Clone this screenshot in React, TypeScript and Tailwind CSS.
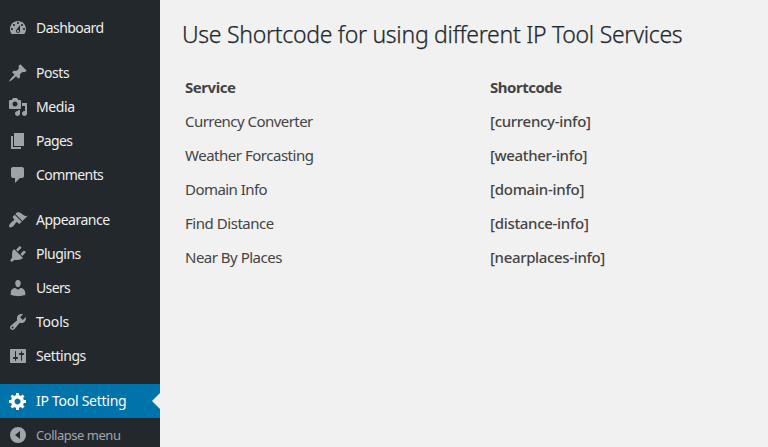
type MenuItem = { label: string; icon: string; tracking: string };

const groups: MenuItem[][] = [
  [
    {
      label: "Dashboard",
      tracking: "tracking-[-0.54px]",
      icon: "M3.76 16h12.48c1.1-1.37 1.76-3.11 1.76-5 0-4.42-3.58-8-8-8s-8 3.58-8 8c0 1.89.66 3.63 1.76 5zM10 4c.55 0 1 .45 1 1s-.45 1-1 1-1-.45-1-1 .45-1 1-1zM6 6c.55 0 1 .45 1 1s-.45 1-1 1-1-.45-1-1 .45-1 1-1zm8 0c.55 0 1 .45 1 1s-.45 1-1 1-1-.45-1-1 .45-1 1-1zm-5.37 5.55L12 7v6c0 1.1-.9 2-2 2s-2-.9-2-2c0-.57.24-1.08.63-1.45zM4 10c.55 0 1 .45 1 1s-.45 1-1 1-1-.45-1-1 .45-1 1-1zm12 0c.55 0 1 .45 1 1s-.45 1-1 1-1-.45-1-1 .45-1 1-1zm-5 3c0-.55-.45-1-1-1s-1 .45-1 1 .45 1 1 1 1-.45 1-1z",
    },
  ],
  [
    {
      label: "Posts",
      tracking: "tracking-[-0.45px]",
      icon: "M10.44 3.02l1.82-1.82 6.36 6.35-1.83 1.82c-1.05-.68-2.48-.57-3.41.36l-.75.75c-.92.93-1.04 2.35-.35 3.41l-1.83 1.82-2.41-2.41-2.8 2.79c-.42.42-3.38 2.71-3.8 2.29s1.86-3.39 2.28-3.81l2.79-2.79L4.1 9.36l1.83-1.82c1.05.69 2.48.57 3.4-.36l.75-.75c.93-.92 1.05-2.35.36-3.41z",
    },
    {
      label: "Media",
      tracking: "tracking-[-0.4px]",
      icon: "M13 11V4c0-.55-.45-1-1-1h-1.67L9 1H5L3.67 3H2c-.55 0-1 .45-1 1v7c0 .55.45 1 1 1h10c.55 0 1-.45 1-1zM7 4.5c1.38 0 2.5 1.12 2.5 2.5S8.38 9.5 7 9.5 4.5 8.38 4.5 7 5.62 4.5 7 4.5zM14 6h5v10.5c0 1.38-1.12 2.5-2.5 2.5S14 17.88 14 16.5s1.12-2.5 2.5-2.5c.17 0 .34.02.5.05V9h-3V6zm-4 8.05V13h2v3.5c0 1.38-1.12 2.5-2.5 2.5S7 17.88 7 16.5 8.12 14 9.5 14c.17 0 .34.02.5.05z",
    },
    {
      label: "Pages",
      tracking: "tracking-[-0.65px]",
      icon: "M6 15V2h10v13H6zm-1 1h8v2H3V5h2v11z",
    },
    {
      label: "Comments",
      tracking: "tracking-[-0.57px]",
      icon: "M5 2h9c1.1 0 2 .9 2 2v7c0 1.1-.9 2-2 2h-2l-5 5v-5H5c-1.1 0-2-.9-2-2V4c0-1.1.9-2 2-2z",
    },
  ],
  [
    {
      label: "Appearance",
      tracking: "tracking-[-0.5px]",
      icon: "M14.48 11.06L7.41 3.99l1.5-1.5c.5-.56 2.3-.47 3.51.32 1.21.8 1.43 1.28 2.91 2.1 1.18.64 2.45 1.26 4.45.85zm-.71.71L6.7 4.7 4.93 6.47c-.39.39-.39 1.02 0 1.41l1.06 1.06c.39.39.39 1.03 0 1.42-.6.6-1.43 1.11-2.21 1.69-.35.26-.7.53-1.01.84C1.43 14.23.4 16.08 1.4 17.07c.99 1 2.84-.03 4.18-1.36.31-.31.58-.66.85-1.02.57-.78 1.08-1.61 1.69-2.21.39-.39 1.02-.39 1.41 0l1.06 1.06c.39.39 1.02.39 1.41 0z",
    },
    {
      label: "Plugins",
      tracking: "tracking-[-0.5px]",
      icon: "M13.11 4.36L9.87 7.6 8 5.73l3.24-3.24c.35-.34 1.05-.2 1.56.32.52.51.66 1.21.31 1.55zm-8 1.77l.91-1.12 9.01 9.01-1.19.84c-.71.71-2.63 1.16-3.82 1.16H6.14L4.9 17.26c-.59.59-1.54.59-2.12 0-.59-.58-.59-1.53 0-2.12l1.24-1.24v-3.88c0-1.13.4-3.19 1.09-3.89zm7.26 3.97l3.24-3.24c.34-.35 1.04-.21 1.55.31.52.51.66 1.21.31 1.55l-3.24 3.25z",
    },
    {
      label: "Users",
      tracking: "tracking-[-0.65px]",
      icon: "M10 9.25c-2.27 0-2.73-3.44-2.73-3.44C7 4.02 7.82 2 9.97 2c2.16 0 2.98 2.02 2.71 3.81 0 0-.41 3.44-2.68 3.44zm0 2.57L12.72 10c2.39 0 4.52 2.33 4.52 4.53v2.49s-3.65 1.13-7.24 1.13c-3.65 0-7.24-1.13-7.24-1.13v-2.49c0-2.25 1.94-4.48 4.47-4.48z",
    },
    {
      label: "Tools",
      tracking: "tracking-[-0.2px]",
      icon: "M16.68 9.77c-1.34 1.34-3.3 1.67-4.95.99l-5.41 6.52c-.99.99-2.59.99-3.58 0s-.99-2.59 0-3.57l6.52-5.42c-.68-1.65-.35-3.61.99-4.95 1.28-1.28 3.12-1.62 4.72-1.06l-2.89 2.89 2.82 2.82 2.86-2.87c.53 1.58.18 3.39-1.08 4.65zM3.81 16.21c.4.39 1.04.39 1.43 0 .4-.4.4-1.04 0-1.43-.39-.4-1.03-.4-1.43 0-.39.39-.39 1.03 0 1.43z",
    },
    {
      label: "Settings",
      tracking: "tracking-[-0.42px]",
      icon: "M18 16V4c0-.55-.45-1-1-1H3c-.55 0-1 .45-1 1v12c0 .55.45 1 1 1h14c.55 0 1-.45 1-1zM8 11h1c.55 0 1 .45 1 1s-.45 1-1 1H8v1.5c0 .28-.22.5-.5.5s-.5-.22-.5-.5V13H6c-.55 0-1-.45-1-1s.45-1 1-1h1V5.5c0-.28.22-.5.5-.5s.5.22.5.5V11zm5-2h-1c-.55 0-1-.45-1-1s.45-1 1-1h1V5.5c0-.28.22-.5.5-.5s.5.22.5.5V7h1c.55 0 1 .45 1 1s-.45 1-1 1h-1v5.5c0 .28-.22.5-.5.5s-.5-.22-.5-.5V9z",
    },
  ],
];

const gear =
  "M18 12h-2.18c-.17.7-.44 1.35-.81 1.93l1.54 1.54-2.1 2.1-1.54-1.54c-.58.36-1.23.63-1.91.79V19H8v-2.18c-.68-.16-1.33-.43-1.91-.79l-1.54 1.54-2.12-2.12 1.54-1.54c-.36-.58-.63-1.23-.79-1.91H1V9.03h2.17c.16-.7.44-1.35.8-1.94L2.43 5.55l2.1-2.1 1.54 1.54c.58-.37 1.24-.64 1.93-.81V2h3v2.18c.68.16 1.33.43 1.91.79l1.54-1.54 2.12 2.12-1.54 1.54c.36.59.64 1.24.8 1.94H18V12zm-8.5 1.5c1.66 0 3-1.34 3-3s-1.34-3-3-3-3 1.34-3 3 1.34 3 3 3z";

const collapse = "M10 2a8 8 0 1 0 0 16 8 8 0 0 0 0-16zM12 6v8l-5-4z";

const services = [
  { name: "Currency Converter", nt: "tracking-[-0.54px]", code: "[currency-info]", ct: "tracking-[-0.3px]" },
  { name: "Weather Forcasting", nt: "tracking-[-0.48px]", code: "[weather-info]", ct: "tracking-[-0.36px]" },
  { name: "Domain Info", nt: "tracking-[-0.55px]", code: "[domain-info]", ct: "tracking-[-0.25px]" },
  { name: "Find Distance", nt: "tracking-[-0.46px]", code: "[distance-info]", ct: "tracking-[-0.3px]" },
  { name: "Near By Places", nt: "tracking-[-0.5px]", code: "[nearplaces-info]", ct: "tracking-[-0.35px]" },
];

function Icon({ d }: { d: string }) {
  return (
    <svg viewBox="0 0 20 20" className="size-5 shrink-0" fill="currentColor" fillRule="evenodd">
      <path d={d} />
    </svg>
  );
}

function Row({ item }: { item: MenuItem }) {
  return (
    <li className="flex h-[34px] items-center gap-2 pl-2">
      <span className="flex text-[#9ea3a8]">
        <Icon d={item.icon} />
      </span>
      <span className={`text-sm leading-[18px] text-[#eee] ${item.tracking}`}>{item.label}</span>
    </li>
  );
}

export default function App() {
  return (
    <div className="flex h-[447px] w-[768px] overflow-hidden bg-[#f1f1f1] font-['Noto_Sans','Open_Sans',sans-serif]">
      <nav className="flex w-40 shrink-0 flex-col gap-[11px] overflow-hidden bg-[#23282d] pt-[11px]">
        {groups.map((group) => (
          <ul key={group[0].label}>
            {group.map((item) => (
              <Row key={item.label} item={item} />
            ))}
          </ul>
        ))}
        <ul>
          <li className="flex h-[34px] items-center gap-2 bg-[#0073aa] pl-2 text-white">
            <Icon d={gear} />
            <span className="grow text-sm leading-[18px] tracking-[-0.27px]">IP Tool Setting</span>
            <svg viewBox="0 0 8 16" className="h-4 w-2" fill="#f1f1f1">
              <path d="M8 0v16L0 8z" />
            </svg>
          </li>
          <li className="flex h-[34px] items-center gap-2 pl-2 text-[#a0a5aa]">
            <Icon d={collapse} />
            <span className="text-[13px] leading-[18px] tracking-[-0.47px]">Collapse menu</span>
          </li>
        </ul>
      </nav>
      <main className="pl-[22px] pt-[19px]">
        <h1 className="whitespace-nowrap text-[23px] font-light leading-[30px] tracking-[-0.28px] text-[#23282d] [-webkit-text-stroke:0.25px_#23282d]">
          Use Shortcode for using different IP Tool Services
        </h1>
        <div className="mt-[21px] pl-[3px] text-[15px] text-[#444]">
          <div className="grid h-[34px] grid-cols-[305px_200px] items-center font-bold">
            <span className="tracking-[-0.45px]">Service</span>
            <span className="tracking-[-0.48px]">Shortcode</span>
          </div>
          {services.map((s) => (
            <div key={s.code} className="grid h-[34px] grid-cols-[305px_200px] items-center">
              <span className={s.nt}>{s.name}</span>
              <span className={`font-medium ${s.ct}`}>{s.code}</span>
            </div>
          ))}
        </div>
      </main>
    </div>
  );
}
